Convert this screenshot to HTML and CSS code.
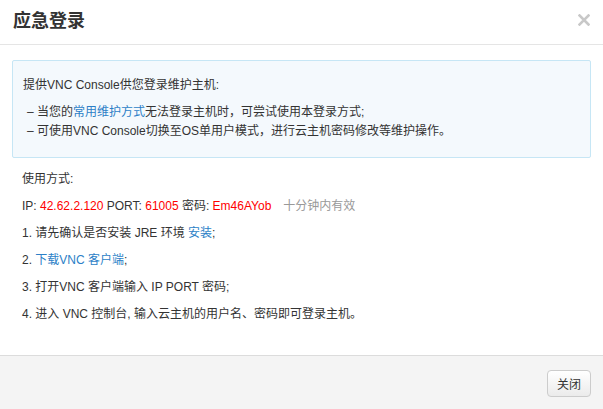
FILE: index.html
```html
<!DOCTYPE html>
<html lang="zh-CN">
<head>
<meta charset="utf-8">
<link rel="stylesheet" href="styles.css">
</head>
<body>
<div class="modal">
  <div class="modal-header">
    <h3 class="title">应急登录</h3>
    <span class="close"><svg width="12" height="12" viewBox="0 0 12 12"><path d="M1.5 1.5 L10.5 10.5 M10.5 1.5 L1.5 10.5" stroke="#c8c8c8" stroke-width="2.6" stroke-linecap="square"/></svg></span>
  </div>
  <div class="modal-body">
    <div class="alert">
      <p class="alert-head">提供VNC Console供您登录维护主机:</p>
      <ul class="alert-list">
        <li>– 当您的<a class="link">常用维护方式</a>无法登录主机时，可尝试使用本登录方式;</li>
        <li>– 可使用VNC Console切换至OS单用户模式，进行云主机密码修改等维护操作。</li>
      </ul>
    </div>
    <div class="steps">
      <p>使用方式:</p>
      <p>IP: <span class="red">42.62.2.120</span> PORT: <span class="red">61005</span> 密码: <span class="red">Em46AYob</span><span class="gray">十分钟内有效</span></p>
      <p>1. 请先确认是否安装 JRE 环境 <a class="link">安装</a>;</p>
      <p>2. <a class="link">下载VNC 客户端</a>;</p>
      <p>3. 打开VNC 客户端输入 IP PORT 密码;</p>
      <p>4. 进入 VNC 控制台, 输入云主机的用户名、密码即可登录主机。</p>
    </div>
  </div>
  <div class="modal-footer">
    <button class="btn">关闭</button>
  </div>
</div>
</body>
</html>
```

FILE: styles.css
```css
html, body {
  margin: 0;
  padding: 0;
  background: #fff;
}
body {
  font-family: "Liberation Sans", "Noto Sans CJK SC", sans-serif;
  font-size: 12px;
  color: #333;
}
.modal {
  width: 603px;
  height: 409px;
  display: flex;
  flex-direction: column;
}
.modal-header {
  border-bottom: 1px solid #e5e5e5;
  display: flex;
  align-items: center;
  justify-content: space-between;
  padding: 0 13px 0 13px;
  box-sizing: border-box;
  height: 45px;
}
.title {
  margin: 0;
  font-size: 18px;
  font-weight: bold;
  color: #333;
  line-height: 24px;
  position: relative;
  top: -1px;
}
.close {
  display: flex;
  width: 12px;
  height: 12px;
  position: relative;
  top: -2px;
}
.modal-body {
  flex: 1;
  padding: 15px 12px 0 12px;
}
.alert {
  border: 1px solid #c6e6f5;
  background: #f4f9fd;
  border-radius: 2px;
  padding: 15px 10px 15px 10px;
  height: 98px;
  box-sizing: border-box;
}
.alert-head {
  margin: 0;
  line-height: 19px;
}
.alert-list {
  list-style: none;
  margin: 8px 0 0 0;
  padding: 0 0 0 4px;
}
.alert-list li {
  line-height: 19px;
}
.link {
  color: #2c7fc7;
  text-decoration: none;
}
.steps {
  padding: 12px 0 0 10px;
}
.steps p {
  margin: 0 0 8px 0;
  line-height: 19px;
}
.red {
  color: #ff0000;
}
.gray {
  color: #999;
  margin-left: 12px;
}
.modal-footer {
  height: 54px;
  box-sizing: border-box;
  border-top: 1px solid #dcdcdc;
  background: #f4f4f4;
  display: flex;
  align-items: center;
  justify-content: flex-end;
  padding: 0 12px 0 0;
}
.btn {
  width: 44px;
  height: 27px;
  border: 1px solid #cccccc;
  border-radius: 4px;
  background: linear-gradient(#ffffff, #ebebeb);
  font-family: "Liberation Sans", "Noto Sans CJK SC", sans-serif;
  font-size: 12px;
  color: #333;
  padding: 0;
  position: relative;
  top: 1px;
}
```
